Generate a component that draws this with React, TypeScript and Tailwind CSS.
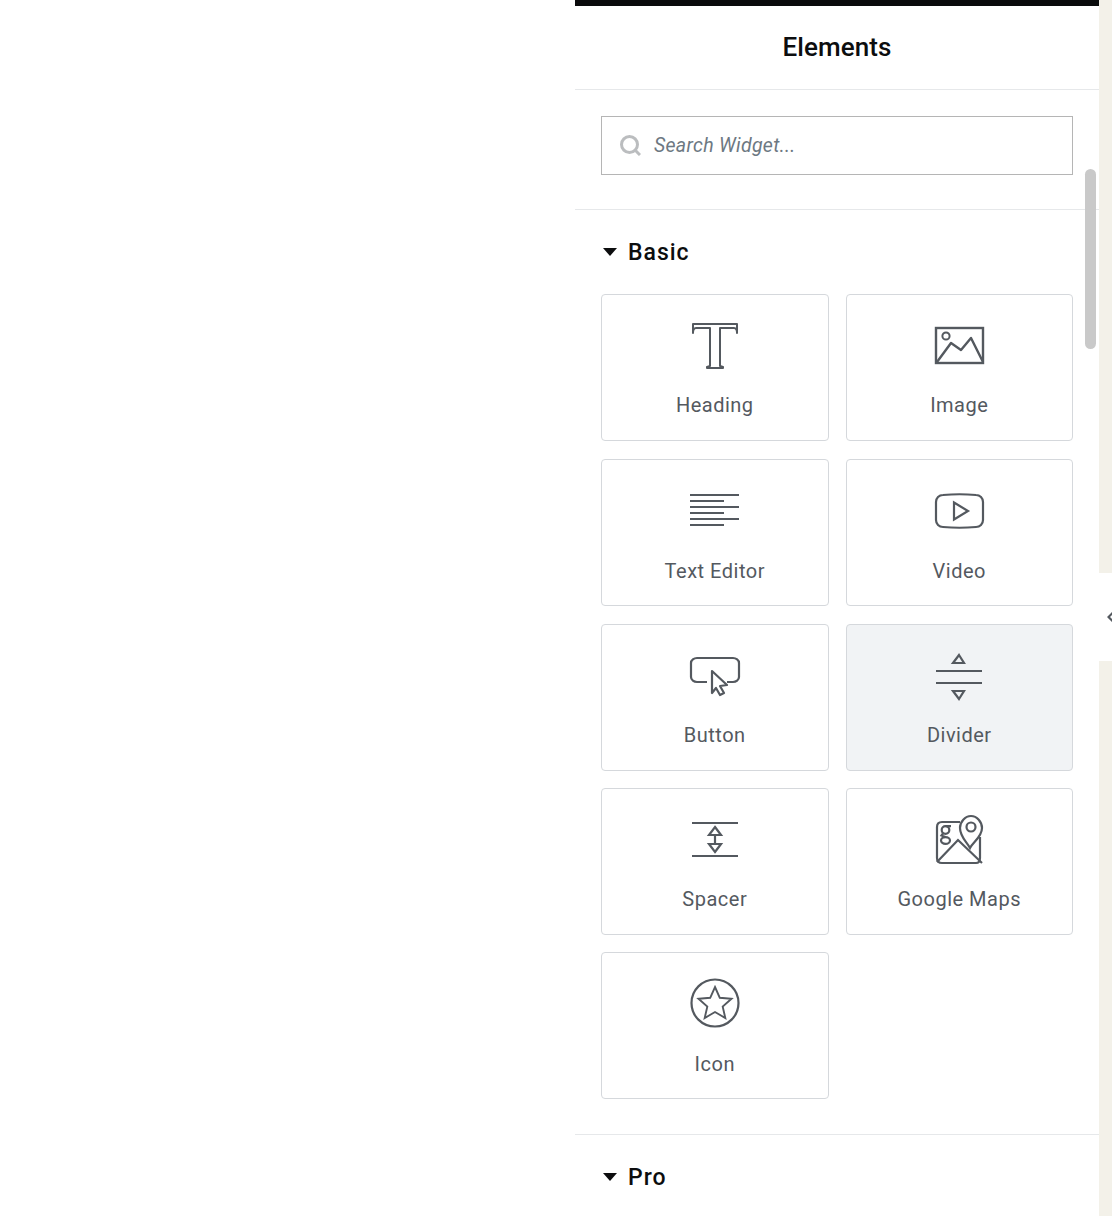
import { ReactNode } from "react";

const stroke = {
  fill: "none",
  stroke: "#54595f",
  strokeWidth: 2,
};

const icons: Record<string, ReactNode> = {
  heading: (
    <g {...stroke}>
      <path d="M1 10V1h44v9c0-3-1-5-3-5H28v38l3 1v1H15v-1l3-1V5H4C2 5 1 7 1 10z" strokeLinejoin="round" />
    </g>
  ),
  image: (
    <g {...stroke} strokeWidth={2.400}>
      <rect x="1" y="2" width="47" height="35" />
      <circle cx="11" cy="10" r="3.600" strokeWidth={2} />
      <path d="M2 36l14-19 10 7 10-12 12 24" strokeLinejoin="round" />
    </g>
  ),
  text: (
    <g {...stroke}>
      <path d="M0 1h49M0 7h34M0 13h49M0 19h34M0 25h49M0 31h34" />
    </g>
  ),
  video: (
    <g {...stroke} strokeWidth={2.200}>
      <path d="M8 2c11-1 22-1 33 0 4 0 7 3 7 7v18c0 4-3 7-7 7-11 1-22 1-33 0-4 0-7-3-7-7V9c0-4 3-7 7-7z" />
      <path d="M19 9.500v17L33 18z" strokeLinejoin="miter" />
    </g>
  ),
  button: (
    <g {...stroke} strokeWidth={2.200}>
      <path d="M17 25H7c-3 0-6-2-6-5V6c0-3 3-5 6-5h36c3 0 6 2 6 5v14c0 3-3 5-6 5H37" />
      <path d="M22 14l15 14-7 1 4 7-4 2-4-7-4 5z" strokeLinejoin="round" />
    </g>
  ),
  divider: (
    <g {...stroke} strokeWidth={2.200}>
      <path d="M1 18h46M1 30h46" />
      <path d="M24 2l5 8H18z" strokeLinejoin="miter" />
      <path d="M24 46l5-8H18z" strokeLinejoin="miter" />
    </g>
  ),
  spacer: (
    <g {...stroke} strokeWidth={2.200}>
      <path d="M1 1h46M1 34h46" />
      <path d="M24 5l6 8H18zM24 30l6-8H18zM24 13v9" strokeLinejoin="miter" />
    </g>
  ),
  maps: (
    <g {...stroke} strokeWidth={2.200}>
      <path d="M24 7H6C3 7 1 9 1 12v31c0 3 2 5 5 5h34c3 0 4-2 4-5V22" />
      <path d="M1 47l21-22 24 23" />
      <path d="M34 33c-3-6-10-11-10-20 0-6 5-12 11-12s11 6 11 12c0 9-9 14-12 20z" fill="#fff" />
      <circle cx="35" cy="12" r="4.500" />
      <circle cx="9.500" cy="15" r="3.800" />
      <ellipse cx="9.500" cy="25.500" rx="4.500" ry="3.400" />
      <path d="M9.500 11.200h5.500M7 18.500l-1.500 2 4 1.500" />
    </g>
  ),
  icon: (
    <g {...stroke} strokeWidth={2.200}>
      <circle cx="24" cy="24" r="23.500" />
      <path d="M24 8l4.800 10.800 11.700 1-8.800 7.800 2.600 11.400L24 33l-10.300 6 2.600-11.400-8.800-7.800 11.700-1z" strokeLinejoin="miter" strokeWidth={1.900} />
    </g>
  ),
};

const widgets = [
  { name: "Heading", icon: "heading", w: 46, h: 46, view: "0 0 46 46", top: "mt-[28px]", box: "h-[95px]" },
  { name: "Image", icon: "image", w: 49, h: 38, view: "0 0 49 38", top: "mt-[31px]", box: "h-[95px]" },
  { name: "Text Editor", icon: "text", w: 49, h: 32, view: "0 0 49 32", top: "mt-[34px]", box: "h-[96px]" },
  { name: "Video", icon: "video", w: 49, h: 36, view: "0 0 49 36", top: "mt-[33px]", box: "h-[96px]" },
  { name: "Button", icon: "button", w: 50, h: 39, view: "0 0 50 39", top: "mt-[32px]", box: "h-[95px]" },
  { name: "Divider", icon: "divider", w: 48, h: 48, view: "0 0 48 48", top: "mt-[28px]", box: "h-[95px]", active: true },
  { name: "Spacer", icon: "spacer", w: 48, h: 35, view: "0 0 48 35", top: "mt-[33px]", box: "h-[95px]" },
  { name: "Google Maps", icon: "maps", w: 47, h: 49, view: "0 0 47 49", top: "mt-[26px]", box: "h-[95px]" },
  { name: "Icon", icon: "icon", w: 48, h: 48, view: "0 0 48 48", top: "mt-[26px]", box: "h-[96px]" },
];

const Caret = () => (
  <svg width="14" height="8" viewBox="0 0 14 8" className="shrink-0">
    <path d="M0 0h14L7 8z" fill="#0c0d0e" />
  </svg>
);

const App = () => (
  <div className="relative flex h-[1216px] w-full overflow-hidden bg-white font-['Roboto',sans-serif]">
    <div className="flex-1" />

    <div className="w-[524px] shrink-0">
      <div className="h-[6px] bg-[#0a0b0c]" />
      <div className="flex h-[84px] items-center justify-center border-b border-[#e6e8ea]">
        <h1 className="text-[26px] font-medium tracking-[0.1px] text-[#0c0d0e]">Elements</h1>
      </div>

      <div className="border-b border-[#e6e8ea] px-[26px] pt-[26px] pb-[34px]">
        <div className="flex h-[59px] items-center gap-[13px] border border-[#b5b5b5] px-[18px]">
          <svg width="21" height="21" viewBox="0 0 21 21" fill="none" stroke="#bbbdbf" strokeWidth="3">
            <circle cx="9.500" cy="9.500" r="8" />
            <path d="M15 15l5 5" />
          </svg>
          <span className="text-[19.500px] tracking-[0.3px] italic text-[#6d7882]">Search Widget...</span>
        </div>
      </div>

      <div className="border-b border-[#e6e8ea] px-[26px] pb-[35px]">
        <div className="flex h-[84px] items-center gap-[11px] pl-[2px]">
          <Caret />
          <span className="pt-[2px] text-[23px] font-medium tracking-[1px] text-[#0c0d0e]">Basic</span>
        </div>
        <div className="grid grid-cols-2 grid-rows-[165px_165px_164px_164px_147px] gap-x-[17px]">
          {widgets.map((widget) => (
            <div
              key={widget.name}
              className={`flex h-[147px] flex-col items-center rounded-[4px] border border-[#d5d8dc] ${
                widget.active ? "bg-[#f1f3f5]" : "bg-white"
              }`}
            >
              <div className={widget.box}>
                <svg width={widget.w} height={widget.h} viewBox={widget.view} className={`overflow-visible ${widget.top}`}>
                  {icons[widget.icon]}
                </svg>
              </div>
              <span className="text-[20px] tracking-[0.5px] text-[#54595f]">{widget.name}</span>
            </div>
          ))}
        </div>
      </div>

      <div className="flex h-[84px] items-center gap-[11px] px-[28px]">
        <Caret />
        <span className="pt-[2px] text-[23px] font-medium tracking-[1px] text-[#0c0d0e]">Pro</span>
      </div>
    </div>

    <div className="w-[13px] shrink-0 bg-[#f3f1e9]" />

    {/* overlay scrollbar */}
    <div className="absolute top-[169px] left-[1085px] h-[180px] w-[11px] rounded-full bg-[#c9c9c9]" />

    {/* panel collapse handle */}
    <div className="absolute top-[573px] left-[1099px] flex h-[88px] w-[13px] items-center justify-end bg-white">
      <svg width="5" height="12" viewBox="0 0 5 12">
        <path d="M5 1v3L3 6l2 2v3L0 6z" fill="#54595f" />
      </svg>
    </div>
  </div>
);

export default App;
